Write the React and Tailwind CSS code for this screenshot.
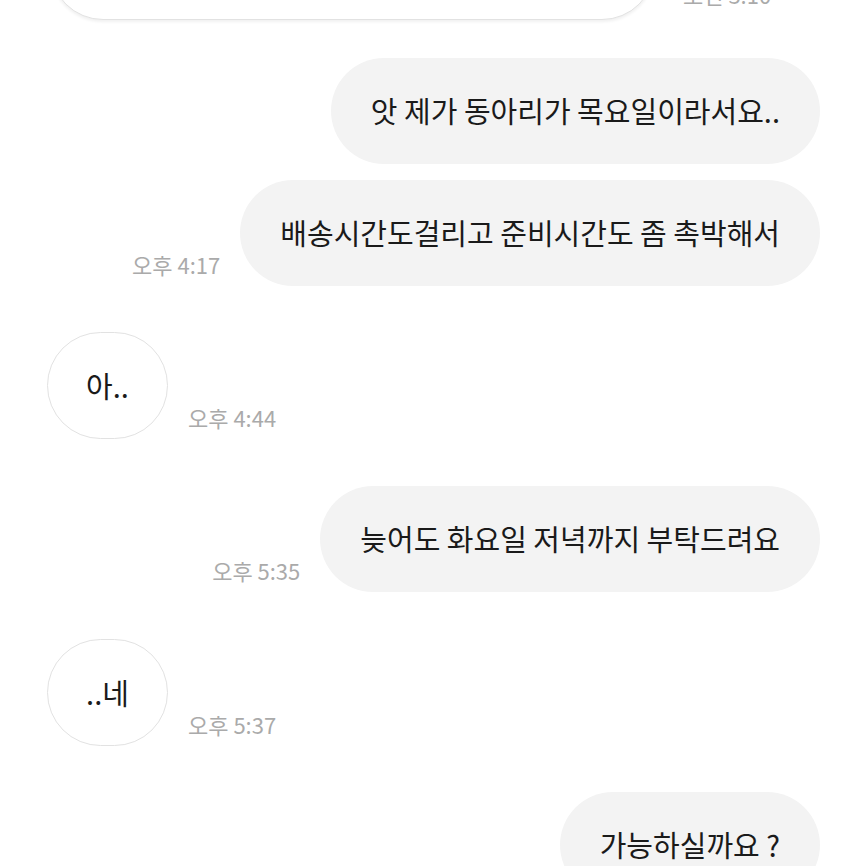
const font = { fontFamily: '"Noto Sans CJK KR", "Noto Sans", sans-serif' }

function Outgoing({ text, time }) {
  return (
    <div className="flex justify-end items-end gap-5 pr-[46px]">
      {time && <span className="pb-[5px] text-[22px] text-[#aaaaaa]">{time}</span>}
      <div className="h-[106px] flex items-center px-10 rounded-full bg-[#f3f3f3] text-[29px] text-[#1a1a1a] whitespace-nowrap">
        {text}
      </div>
    </div>
  )
}

function Incoming({ text, time }) {
  return (
    <div className="flex items-end gap-5 pl-[47px]">
      <div className="w-[121px] h-[107px] flex items-center justify-center rounded-full bg-white border-[1.5px] border-[#e2e2e2] text-[29px] text-[#1a1a1a]">
        {text}
      </div>
      <span className="pb-[5px] text-[22px] text-[#aaaaaa]">{time}</span>
    </div>
  )
}

export default function App() {
  return (
    <div className="w-[866px] h-[866px] overflow-hidden bg-white" style={font}>
      <div className="flex items-end gap-7 pl-[50px] mt-[-86px]">
        <div className="w-[605px] h-[106px] rounded-full bg-white border-[1.5px] border-[#e2e2e2] shadow-[0_2px_3px_rgba(0,0,0,0.06)]" />
        <span className="pb-[9px] text-[22px] text-[#aaaaaa]">오전 3:10</span>
      </div>
      <div className="flex flex-col mt-[38px]">
        <Outgoing text="앗 제가 동아리가 목요일이라서요.." />
        <div className="h-4" />
        <Outgoing text="배송시간도걸리고 준비시간도 좀 촉박해서" time="오후 4:17" />
        <div className="h-[46px]" />
        <Incoming text="아.." time="오후 4:44" />
        <div className="h-[47px]" />
        <Outgoing text="늦어도 화요일 저녁까지 부탁드려요" time="오후 5:35" />
        <div className="h-[47px]" />
        <Incoming text="..네" time="오후 5:37" />
        <div className="h-[46px]" />
        <Outgoing text="가능하실까요 ?" />
      </div>
    </div>
  )
}
